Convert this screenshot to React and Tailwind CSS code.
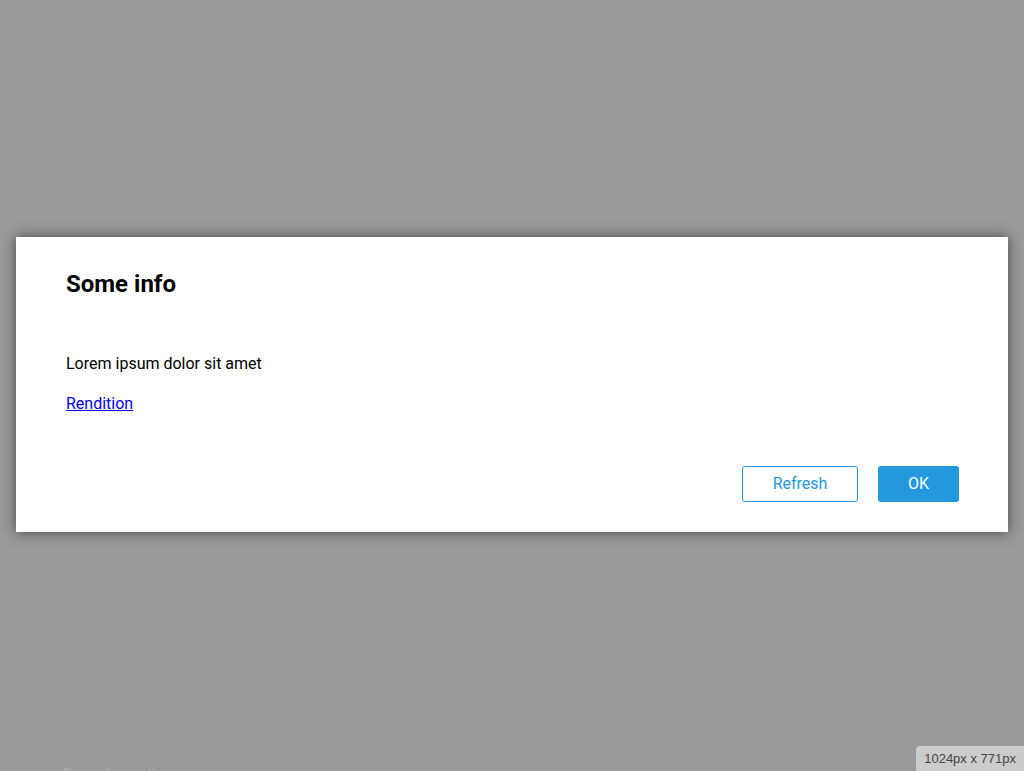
export default function App() {
  return (
    <div
      className="relative h-[771px] w-full overflow-hidden bg-[#999999]"
      style={{ fontFamily: 'Roboto, "Liberation Sans", sans-serif' }}
    >
      {/* underlying page peeking through the overlay */}
      <div className="absolute left-[63px] top-[764px] text-sm font-medium text-[#b0b0b0]">
        Secondary action
      </div>

      <div className="flex h-full items-center justify-center px-4">
        <div className="mb-[2px] w-full bg-white pt-[31px] pr-[49px] pb-[30px] pl-[50px] shadow-[0_0_12px_rgba(0,0,0,0.55)]">
          <h2 className="text-2xl leading-8 font-bold text-black">Some info</h2>
          <div className="mt-[52px] text-base leading-6 text-black">
            <p>Lorem ipsum dolor sit amet</p>
            <p className="mt-4">
              <a href="#" className="text-[#0000ee] underline">Rendition</a>
            </p>
          </div>
          <div className="mt-[50px] flex justify-end gap-5">
            <button
              type="button"
              className="h-9 w-[116px] rounded-[3px] border border-[#2398dc] bg-white text-base text-[#2398dc]"
            >
              Refresh
            </button>
            <button
              type="button"
              className="h-9 w-[81px] rounded-[3px] bg-[#2398dc] text-base text-white"
            >
              OK
            </button>
          </div>
        </div>
      </div>

      <div
        className="absolute right-0 bottom-0 rounded-tl-[4px] bg-[#cccccc] px-2 py-[5px] text-[13px] leading-[15px] text-[#444444]"
        style={{ fontFamily: '"Liberation Sans", Arial, sans-serif' }}
      >
        1024px x 771px
      </div>
    </div>
  );
}
